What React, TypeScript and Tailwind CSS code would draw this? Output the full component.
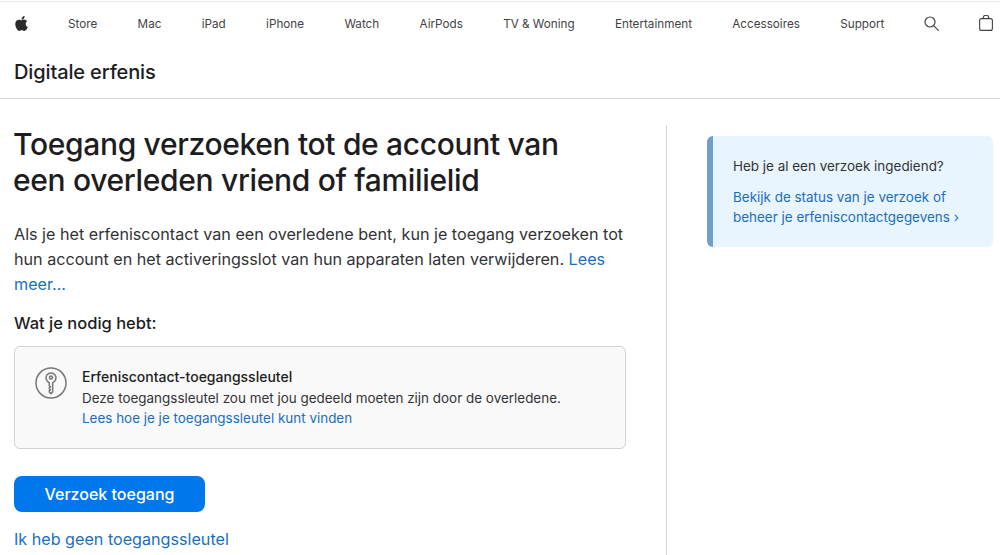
import React from "react";
import { FaApple } from "react-icons/fa";

const nav = ["Store", "Mac", "iPad", "iPhone", "Watch", "AirPods", "TV & Woning", "Entertainment", "Accessoires", "Support"];

export default function App() {
  return (
    <div className="h-[555px] w-[1000px] overflow-hidden bg-white font-['Inter',sans-serif] text-[#1d1d1f]">
      <div className="mt-px flex h-[47px] items-center border-t border-[#e6e6e6] pl-[13px]">
        <FaApple className="mb-[4px] h-[17px] w-[17px] text-[#2b2b2b]" />
        <nav className="ml-[38px] flex gap-[40.35px] text-[11.7px] text-[#424245]">
          {nav.map((n) => (
            <span key={n}>{n}</span>
          ))}
        </nav>
        <svg className="absolute left-[924px] top-[16px] h-[15px] w-[15px]" viewBox="0 0 15 15" fill="none" stroke="#444" strokeWidth="1.2">
          <circle cx="6" cy="6" r="5" />
          <path d="M9.7 9.7l4.6 4.6" strokeLinecap="round" />
        </svg>
        <svg className="absolute left-[979px] top-[15px] h-[16px] w-[14px]" viewBox="0 0 14 16" fill="none" stroke="#444" strokeWidth="1.1">
          <rect x="0.6" y="3.6" width="12.8" height="11.8" rx="2" />
          <path d="M4.2 3.6V3a2.8 2.8 0 0 1 5.6 0v.6" />
        </svg>
      </div>
      <div className="flex h-[51px] items-center border-b border-[#d6d6d6] pb-[2px] pl-[14px] text-[20px] font-medium tracking-[-0.13px] text-[#1d1d1f]">
        Digitale erfenis
      </div>
      <main className="flex">
        <div className="w-[612px] ml-[14px] mt-[27px] shrink-0">
          <h1 className="-ml-px text-[30px] font-medium leading-[36px] tracking-[-0.33px]">
            Toegang verzoeken tot de account van
            <br />
            een overleden vriend of familielid
          </h1>
          <p className="mt-[24px] text-[16.15px] leading-[25px] text-[#333336]">
            Als je het erfeniscontact van een overledene bent, kun je toegang verzoeken tot hun account en het activeringsslot van hun apparaten laten verwijderen.{" "}
            <span className="text-[#1a6fc0]">Lees meer...</span>
          </p>
          <h2 className="mt-[14px] text-[16.5px] font-medium leading-[25px]">Wat je nodig hebt:</h2>
          <div className="mt-[10px] flex h-[103px] rounded-[6px] border border-[#d2d2d7] bg-[#f9f9f9] pl-[20px] pt-[20px]">
            <svg className="h-[32px] w-[32px] shrink-0" viewBox="0 0 32 32" fill="none" stroke="#777" strokeWidth="1.5">
              <circle cx="16" cy="16" r="15" />
              <path d="M14.3 15.6a5 5 0 1 1 3.4 0V25l-1.7 1.6-1.7-1.5v-1.3l1.2-1-1.2-1v-1l1.2-1-1.2-1z" strokeLinejoin="round" />
              <circle cx="16" cy="10.5" r="1.5" />
            </svg>
            <div className="ml-[15px] text-[13.45px] leading-[20.5px]">
              <div className="font-medium text-[14px]">Erfeniscontact-toegangssleutel</div>
              <div className="text-[#333336]">Deze toegangssleutel zou met jou gedeeld moeten zijn door de overledene.</div>
              <div className="text-[#1a6fc0]">Lees hoe je je toegangssleutel kunt vinden</div>
            </div>
          </div>
          <button className="mt-[27px] flex h-[36px] w-[191px] items-center justify-center rounded-[8px] bg-[#0077ed] text-[16px] font-medium text-white">
            Verzoek toegang
          </button>
          <div className="mt-[16px] text-[16.15px] leading-[22px] text-[#1a6fc0]">Ik heb geen toegangssleutel</div>
        </div>
        <div className="ml-[40px] mt-[26px] h-[430px] border-l border-[#d6d6d6] pl-[40px]">
          <div className="mt-[11px] h-[111px] w-[286px] rounded-[6px] border-l-[6px] border-[#6f9fc8] bg-[#e8f4fe] pl-[20px] pt-[20px] text-[13.45px] leading-[20.5px]">
            <div className="text-[#333336]">Heb je al een verzoek ingediend?</div>
            <div className="mt-[10px] text-[#1a6fc0]">
              Bekijk de status van je verzoek of
              <br />
              beheer je erfeniscontactgegevens ›
            </div>
          </div>
        </div>
      </main>
    </div>
  );
}
